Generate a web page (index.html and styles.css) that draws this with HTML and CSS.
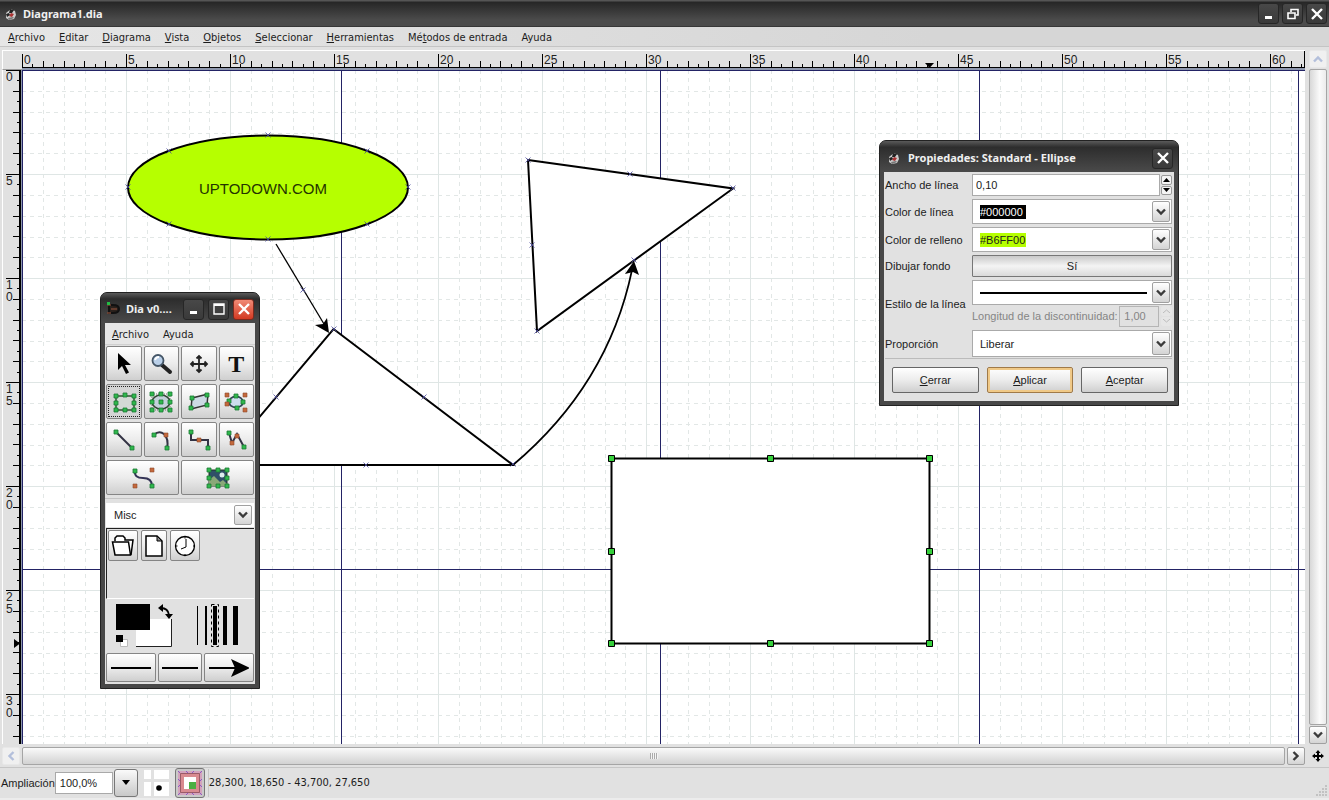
FILE: index.html
```html
<!DOCTYPE html>
<html lang="es">
<head>
<meta charset="utf-8">
<title>Diagrama1.dia</title>
<link rel="stylesheet" href="styles.css">
</head>
<body>
<svg class="defs" aria-hidden="true">
  <defs>
    <symbol id="app" viewBox="0 0 12 12">
      <path d="M1 5l5-4 4 2 1 4-2 4-5 1-3-2z" fill="#ccc"/>
      <path d="M5 1l4 1-2 3-3 0zM1 6l3-1 1 2-3 2z" fill="#222"/>
      <path d="M6 5l3 1-2 3-3-1z" fill="#a33"/>
      <path d="M3 10l5-1 1 1-5 2z" fill="#777"/>
    </symbol>
    <symbol id="chev" viewBox="0 0 10 8"><path d="M1 1.500l4 4 4-4" fill="none" stroke="currentColor" stroke-width="2.4"/></symbol>
    <symbol id="close" viewBox="0 0 12 12"><path d="M1 1l10 10M11 1L1 11" stroke="#fff" stroke-width="2.4"/></symbol>
    <symbol id="min" viewBox="0 0 12 12"><path d="M2 8h7v3H2z" fill="#fff"/></symbol>
    <g id="n"><path d="M-2-2h4v4h-4z" fill="#2fb84c" stroke="#1d7a35" stroke-width=".8"/></g>
    <g id="o"><path d="M-2-2h4v4h-4z" fill="#c4683c" stroke="#8f4a2c" stroke-width=".6"/></g>
    <g id="x"><path d="M-2.500-2.500l5 5M2.500-2.500l-5 5" stroke="#4a4a9c" stroke-width=".8"/></g>
    <g id="h"><path d="M-3-3h6v6h-6z" fill="#36d03c" stroke="#000"/></g>
    <pattern id="grid" width="104" height="104" patternUnits="userSpaceOnUse">
      <g stroke="#e2e7e6" stroke-dasharray="4 4">
        <path d="M21.500 0v104M42.500 0v104M63.500 0v104M83.500 0v104M0 21.500h104M0 42.500h104M0 63.500h104M0 83.500h104"/>
      </g>
      <path d="M.5 0v104M0 .5h104" stroke="#dfe6e5"/>
    </pattern>
    <pattern id="hticks" width="104" height="20" patternUnits="userSpaceOnUse">
      <path d="M.5 3v14M21.500 10v7M42.500 10v7M62.500 10v7M83.500 10v7M10.500 13v4M31.500 13v4M52.500 13v4M73.500 13v4M94.500 13v4" stroke="#000"/>
    </pattern>
    <pattern id="vticks" width="20" height="104" patternUnits="userSpaceOnUse">
      <path d="M3 .5h14M10 21.500h7M10 42.500h7M10 62.500h7M10 83.500h7M14 10.500h3M14 31.500h3M14 52.500h3M14 73.500h3M14 94.500h3" stroke="#000"/>
    </pattern>
  </defs>
</svg>

<header class="titlebar">
  <svg class="appicon"><use href="#app"/></svg>
  <h1>Diagrama1.dia</h1>
  <button class="winbtn" aria-label="Minimizar"><svg><use href="#min"/></svg></button>
  <button class="winbtn" aria-label="Restaurar"><svg viewBox="0 0 12 12"><path d="M4 4V1.500h7V7H9M4 1.500h7" fill="none" stroke="#fff" stroke-width="1.600"/><path d="M1 5h7v5.500H1z" fill="none" stroke="#fff" stroke-width="1.600"/></svg></button>
  <button class="winbtn" aria-label="Cerrar ventana"><svg><use href="#close"/></svg></button>
</header>

<nav class="menubar">
  <button><u>A</u>rchivo</button><button><u>E</u>ditar</button><button><u>D</u>iagrama</button><button><u>V</u>ista</button><button><u>O</u>bjetos</button><button><u>S</u>eleccionar</button><button><u>H</u>erramientas</button><button>Mé<u>t</u>odos de entrada</button><button>Ayuda</button>
</nav>

<main class="work">
  <div class="corner"></div>
  <svg class="hruler" aria-label="Regla horizontal">
    <rect width="100%" height="17" fill="url(#hticks)"/>
    <path d="M903 12h9l-4.500 5z"/>
    <g class="num">
      <text x="2" y="13">0</text><text x="106" y="13">5</text><text x="210" y="13">10</text><text x="314" y="13">15</text><text x="418" y="13">20</text><text x="522" y="13">25</text><text x="626" y="13">30</text><text x="730" y="13">35</text><text x="834" y="13">40</text><text x="938" y="13">45</text><text x="1042" y="13">50</text><text x="1146" y="13">55</text><text x="1250" y="13">60</text>
    </g>
  </svg>
  <svg class="vruler" aria-label="Regla vertical">
    <rect width="17" height="100%" fill="url(#vticks)"/>
    <path d="M11 569v9l6-4.500z"/>
    <g class="num">
      <text x="3" y="11">0</text><text x="3" y="115">5</text>
      <text x="3" y="219">1</text><text x="3" y="231">0</text>
      <text x="3" y="323">1</text><text x="3" y="335">5</text>
      <text x="3" y="427">2</text><text x="3" y="439">0</text>
      <text x="3" y="531">2</text><text x="3" y="543">5</text>
      <text x="3" y="635">3</text><text x="3" y="647">0</text>
    </g>
  </svg>
  <svg class="canvas" role="img" aria-label="Diagrama">
    <rect width="100%" height="100%" fill="url(#grid)"/>
    <g transform="translate(-22 -70)">
      <path d="M22.500 70v800M341.500 70v800M660.500 70v800M979.500 70v800M1298.500 70v800M22 70.500h1600M22 569.500h1600" stroke="#232365" fill="none"/>
      <ellipse cx="268" cy="187.500" rx="140" ry="52" fill="#b6ff00" stroke="#000" stroke-width="2"/>
      <text class="shape-text" x="263" y="194">UPTODOWN.COM</text>
      <g fill="#fff" stroke="#000" stroke-width="2">
        <path d="M528 160L733 188.500 537 331z"/>
        <path d="M333.500 329L513 465H219z"/>
        <path d="M611.500 458.500h318v185h-318z"/>
      </g>
      <path d="M276 244l48 80" stroke="#000" stroke-width="1.300"/>
      <path d="M329 333l-14-8 8-1 4-6z"/>
      <path d="M513 465Q608 385 632 270" fill="none" stroke="#000" stroke-width="1.700"/>
      <path d="M634 261l5 14-6-3-8 2z"/>
      <use href="#x" x="268" y="135"/><use href="#x" x="268" y="239"/><use href="#x" x="128" y="187"/><use href="#x" x="408" y="187"/><use href="#x" x="169" y="151"/><use href="#x" x="367" y="151"/><use href="#x" x="169" y="224"/><use href="#x" x="367" y="224"/>
      <use href="#x" x="528" y="160"/><use href="#x" x="630" y="174"/><use href="#x" x="733" y="188"/><use href="#x" x="532" y="245"/><use href="#x" x="537" y="331"/><use href="#x" x="634" y="260"/>
      <use href="#x" x="303" y="290"/><use href="#x" x="334" y="329"/><use href="#x" x="276" y="397"/><use href="#x" x="424" y="397"/><use href="#x" x="366" y="465"/><use href="#x" x="513" y="464"/>
      <use href="#h" x="611.500" y="458.500"/><use href="#h" x="770.500" y="458.500"/><use href="#h" x="929.500" y="458.500"/><use href="#h" x="611.500" y="551.500"/><use href="#h" x="929.500" y="551.500"/><use href="#h" x="611.500" y="643.500"/><use href="#h" x="770.500" y="643.500"/><use href="#h" x="929.500" y="643.500"/>
    </g>
  </svg>
  <div class="vscroll">
    <button class="arrow off" aria-label="Subir"><svg class="up"><use href="#chev"/></svg></button>
    <div class="thumb"></div>
    <button class="arrow" aria-label="Bajar"><svg><use href="#chev"/></svg></button>
  </div>
  <div class="hscroll">
    <button class="arrow off" aria-label="Izquierda"><svg class="left"><use href="#chev"/></svg></button>
    <div class="thumb"><i></i></div>
    <button class="arrow" aria-label="Derecha"><svg class="right"><use href="#chev"/></svg></button>
  </div>
  <button class="pan" aria-label="Navegar"><svg viewBox="0 0 12 12"><path d="M6 0l2.500 3H7v2h2V3.500L12 6 9 8.500V7H7v2h1.500L6 12 3.500 9H5V7H3v1.500L0 6l3-2.500V5h2V3H3.500z"/></svg></button>
</main>

<footer class="status">
  <label for="zoom">Ampliación</label>
  <input id="zoom" value="100,0%">
  <button class="zoombtn" aria-label="Elegir ampliación"><svg viewBox="0 0 8 5"><path d="M0 0h8L4 5z"/></svg></button>
  <button class="snapgrid" aria-label="Ajustar a la rejilla"><svg viewBox="0 0 26 26"><path d="M0 0h7v9H0zM10 0h15v9H10zM0 12h7v14H0zM10 12h15v14H10z" fill="#fff"/><circle cx="15" cy="18" r="2.800"/></svg></button>
  <button class="snapobj" aria-label="Ajustar a objetos"><svg viewBox="0 0 26 26"><path d="M1 1h24v24H1z" fill="#d4a3bd"/><path d="M1 1l24 24M25 1L1 25M9 1l4 4 4-4M9 25l4-4 4 4M1 9l4 4-4 4M25 9l-4 4 4 4" stroke="#8a5bc4" fill="none"/><path d="M5 5h16v16H5z" fill="#fff" stroke="#d98a90" stroke-width="4"/><path d="M3.500 3.500h19v19h-19z" fill="none" stroke="#9a5a68"/><path d="M12 12h7v7h-7z" fill="#4caf43"/></svg></button>
  <output>28,300, 18,650 - 43,700, 27,650</output>
  <svg class="grip" viewBox="0 0 12 12"><path d="M10 0h2v2h-2zM7 3h2v2H7zM10 3h2v2h-2zM4 6h2v2H4zM7 6h2v2H7zM10 6h2v2h-2zM1 9h2v2H1zM4 9h2v2H4zM7 9h2v2H7zM10 9h2v2h-2z" fill="#c2c2c2"/></svg>
</footer>

<section class="window toolbox" aria-label="Dia">
  <header>
    <svg class="toolicon" viewBox="0 0 14 14"><path d="M3 3h4q6 0 6 4t-6 4H3z" fill="#2a211c" stroke="#111" stroke-width="2"/><path d="M1 3h4M1 11h4M5 7h6" stroke="#743" stroke-width="1.500"/><path d="M1 0h3v3H1z" fill="#2b4"/></svg>
    <h2>Dia v0....</h2>
    <button class="winbtn" aria-label="Minimizar"><svg><use href="#min"/></svg></button>
    <button class="winbtn" aria-label="Maximizar"><svg viewBox="0 0 12 12"><path d="M1 1h10v10H1z" fill="none" stroke="#fff" stroke-width="1.400"/><path d="M1 2h10" stroke="#fff" stroke-width="2"/></svg></button>
    <button class="winbtn red" aria-label="Cerrar"><svg><use href="#close"/></svg></button>
  </header>
  <div class="body">
    <nav><button><u>A</u>rchivo</button><button>Ayuda</button></nav>
    <div class="tools">
      <button aria-label="Modificar"><svg viewBox="0 0 24 24"><path d="M6 1v17l4-4 4 8 3-1.500-4-7.500h6z"/></svg></button>
      <button aria-label="Ampliar"><svg viewBox="0 0 24 24"><path d="M13 13l8 7" stroke="#222" stroke-width="4" stroke-linecap="round"/><circle cx="9" cy="8.500" r="5.500" fill="#b9cfe8" stroke="#456" stroke-width="1.800"/><path d="M6 8q1-3 4-3" stroke="#fff" stroke-width="1.800" fill="none"/></svg></button>
      <button aria-label="Desplazar"><svg viewBox="0 0 24 24"><path d="M12 5v14M5 12h14" stroke="#222" stroke-width="1.800"/><path d="M9.500 6.500L12 4l2.500 2.500M9.500 17.500L12 20l2.500-2.500M6.500 9.500L4 12l2.500 2.500M17.500 9.500L20 12l-2.500 2.500" fill="none" stroke="#222" stroke-width="1.800"/></svg></button>
      <button aria-label="Texto" class="tletter">T</button>
      <button aria-label="Caja" class="on"><svg viewBox="0 0 24 24"><path d="M4 6h18v14H4z" fill="#d3d9d5" stroke="#353" stroke-width="1.500"/><use href="#n" x="4" y="6"/><use href="#n" x="13" y="5"/><use href="#n" x="22" y="6"/><use href="#n" x="4" y="13"/><use href="#n" x="22" y="13"/><use href="#n" x="4" y="20"/><use href="#n" x="13" y="20"/><use href="#n" x="22" y="20"/></svg></button>
      <button aria-label="Elipse"><svg viewBox="0 0 24 24"><path d="M3 4h18v16H3z" fill="none" stroke="#777" stroke-dasharray="1 1"/><ellipse cx="12" cy="12" rx="9" ry="7" fill="#c3d0da" stroke="#343" stroke-width="1.500"/><use href="#n" x="3" y="4"/><use href="#n" x="12" y="4"/><use href="#n" x="21" y="4"/><use href="#n" x="3" y="12"/><use href="#n" x="12" y="12"/><use href="#n" x="21" y="12"/><use href="#n" x="3" y="20"/><use href="#n" x="12" y="20"/><use href="#n" x="21" y="20"/></svg></button>
      <button aria-label="Polígono"><svg viewBox="0 0 24 24"><path d="M5 8l16-4-1 11-16 4z" fill="#ccd9e4" stroke="#333" stroke-width="1.500"/><use href="#n" x="5" y="8"/><use href="#n" x="20" y="5"/><use href="#n" x="20" y="15"/><use href="#n" x="4" y="18"/></svg></button>
      <button aria-label="Beziergon"><svg viewBox="0 0 24 24"><ellipse cx="12" cy="12" rx="7" ry="5.500" fill="#cde" stroke="#345" stroke-width="1.800"/><use href="#n" x="12" y="6"/><use href="#n" x="5" y="11"/><use href="#n" x="19" y="12"/><use href="#n" x="13" y="18"/><use href="#o" x="3" y="5"/><use href="#o" x="21" y="5"/><use href="#o" x="3" y="14"/><use href="#o" x="21" y="20"/></svg></button>
      <button aria-label="Línea"><svg viewBox="0 0 24 24"><path d="M5 5l15 15" stroke="#334" stroke-width="2"/><use href="#n" x="4" y="4"/><use href="#n" x="20" y="20"/></svg></button>
      <button aria-label="Arco"><svg viewBox="0 0 24 24"><path d="M5 7Q10 2 15 6 20 11 18 20" fill="none" stroke="#334" stroke-width="2"/><use href="#n" x="5" y="7"/><use href="#o" x="17" y="7"/><use href="#n" x="18" y="20"/></svg></button>
      <button aria-label="Línea en zigzag"><svg viewBox="0 0 24 24"><path d="M4 4v8h17v9" fill="none" stroke="#334" stroke-width="2"/><use href="#n" x="4" y="4"/><use href="#o" x="12" y="12"/><use href="#n" x="21" y="20"/></svg></button>
      <button aria-label="Polilínea"><svg viewBox="0 0 24 24"><path d="M5 5l3 10 5-9 7 13" fill="none" stroke="#334" stroke-width="2"/><use href="#n" x="5" y="5"/><use href="#o" x="8" y="15"/><use href="#o" x="13" y="8"/><use href="#n" x="20" y="19"/></svg></button>
      <button aria-label="Curva Bézier" class="wide"><svg viewBox="0 0 24 24"><path d="M4 5q-1 7 8 7t9 8" fill="none" stroke="#335" stroke-width="2"/><use href="#n" x="4" y="5"/><use href="#n" x="21" y="20"/><use href="#o" x="21" y="4"/><use href="#o" x="4" y="20"/></svg></button>
      <button aria-label="Imagen" class="wide"><svg viewBox="0 0 24 24"><path d="M3 4h18v16H3z" fill="#2f4f68" stroke="#232"/><circle cx="16" cy="9" r="2.500" fill="#dee"/><path d="M3 20v-6l5-4 6 6 3-2 4 4v2z" fill="#8aa878"/><use href="#n" x="3" y="4"/><use href="#n" x="12" y="4"/><use href="#n" x="21" y="4"/><use href="#n" x="3" y="12"/><use href="#n" x="21" y="12"/><use href="#n" x="3" y="20"/><use href="#n" x="12" y="20"/><use href="#n" x="21" y="20"/></svg></button>
    </div>
    <div class="combo sheet"><select aria-label="Hoja de formas"><option>Misc</option></select><span class="arrow"><svg><use href="#chev"/></svg></span></div>
    <div class="tray">
      <button aria-label="Carpeta"><svg viewBox="0 0 24 24"><path d="M4 7V4l2-2h6l2 2v2h8l-2 15" fill="#fff" stroke="#000" stroke-width="1.500"/><path d="M1.500 8h16l2 13H4z" fill="#fff" stroke="#000" stroke-width="1.500"/></svg></button>
      <button aria-label="Archivo"><svg viewBox="0 0 20 24"><path d="M2 2h11l5 5v15H2z" fill="#fff" stroke="#000" stroke-width="1.500"/><path d="M13 2v5h5z" fill="#888" stroke="#000"/></svg></button>
      <button aria-label="Reloj"><svg viewBox="0 0 24 24"><circle cx="12" cy="12" r="9.500" fill="#fff" stroke="#000" stroke-width="1.300"/><path d="M13 5v8l-5 2M12 2.500v2M12 20v2M2.500 12h2M20 12h2" fill="none" stroke="#000"/></svg></button>
    </div>
    <div class="attrs">
      <svg class="colors" viewBox="0 0 64 48" role="img" aria-label="Colores"><path d="M22 16h36v28H22z" fill="#fff"/><path d="M57.500 16v27.500H22" fill="none" stroke="#222"/><path d="M2 1h34v26H2z"/><path d="M47 5q7 0 8 7" fill="none" stroke="#000" stroke-width="1.800"/><path d="M44 5l5-4v8zM55 16l-4-5h8z"/><path d="M6.500 36.500h7v7h-7z" fill="#fff" stroke="#bbb"/><path d="M2 32h7v7H2z"/></svg>
      <svg class="widths" viewBox="0 0 44 48" role="img" aria-label="Ancho de línea"><path d="M1 3h1v39H1zM9 3h2v39H9zM17 3h4v39h-4zM27 3h4v39h-4zM37 3h5v39h-5z"/><path d="M15.500 1.500h7v42h-7z" fill="none" stroke="#000" stroke-dasharray="3 3"/></svg>
    </div>
    <div class="ends">
      <button aria-label="Flecha inicial"><svg viewBox="0 0 40 20"><path d="M0 10h40" stroke="#000" stroke-width="2"/></svg></button>
      <button aria-label="Estilo de línea"><svg viewBox="0 0 36 20"><path d="M0 10h36" stroke="#000" stroke-width="2"/></svg></button>
      <button aria-label="Flecha final"><svg viewBox="0 0 40 20"><path d="M0 10h26" stroke="#000" stroke-width="2"/><path d="M22 1l19 9-19 9 4-9z"/></svg></button>
    </div>
  </div>
</section>

<section class="window props" aria-label="Propiedades">
  <header>
    <svg class="appicon"><use href="#app"/></svg>
    <h2>Propiedades: Standard - Ellipse</h2>
    <button class="winbtn" aria-label="Cerrar"><svg><use href="#close"/></svg></button>
  </header>
  <form class="body">
    <div class="fields">
      <label for="lw">Ancho de línea</label>
      <div class="spin"><input id="lw" value="0,10"><span class="steps"><button type="button" aria-label="Más"><svg viewBox="0 0 7 4"><path d="M0 4h7L3.500 0z"/></svg></button><button type="button" aria-label="Menos"><svg viewBox="0 0 7 4"><path d="M0 0h7L3.500 4z"/></svg></button></span></div>
      <label for="lc">Color de línea</label>
      <div class="combo"><select id="lc" class="chip black"><option>#000000</option></select><span class="arrow"><svg><use href="#chev"/></svg></span></div>
      <label for="fc">Color de relleno</label>
      <div class="combo"><select id="fc" class="chip lime"><option>#B6FF00</option></select><span class="arrow"><svg><use href="#chev"/></svg></span></div>
      <label for="bg">Dibujar fondo</label>
      <button id="bg" type="button" class="toggle" aria-pressed="true">Sí</button>
      <label for="ls">Estilo de la línea</label>
      <div class="style">
        <div class="combo"><button id="ls" type="button" class="stroke" aria-haspopup="listbox"><span></span></button><span class="arrow"><svg><use href="#chev"/></svg></span></div>
        <div class="dash"><label for="dl">Longitud de la discontinuidad:</label><input id="dl" value="1,00" disabled><span class="steps"><button type="button" disabled aria-label="Más"><svg viewBox="0 0 7 4"><path d="M0 4l3.500-3L7 4" fill="none" stroke="#bbb"/></svg></button><button type="button" disabled aria-label="Menos"><svg viewBox="0 0 7 4"><path d="M0 0l3.500 3L7 0" fill="none" stroke="#bbb"/></svg></button></span></div>
      </div>
      <label for="pr">Proporción</label>
      <div class="combo tall"><select id="pr"><option>Liberar</option></select><span class="arrow"><svg><use href="#chev"/></svg></span></div>
    </div>
    <div class="actions"><button type="button"><span><u>C</u>errar</span></button><button type="button" class="default"><span><u>A</u>plicar</span></button><button type="button"><span><u>A</u>ceptar</span></button></div>
  </form>
</section>
</body>
</html>
```
FILE: styles.css
```css
* { box-sizing: border-box; }
body {
  margin: 0;
  height: 100vh;
  display: flex;
  flex-direction: column;
  overflow: hidden;
  position: relative;
  background: #e1e1e1;
  color: #1c1c1c;
  font: 11px/14px "Liberation Sans", Arial, sans-serif;
}
.defs { position: absolute; width: 0; height: 0; }
button, input, select { font: inherit; color: inherit; margin: 0; padding: 0; border: 0; background: none; }
select { appearance: none; outline: 0; }
svg { display: block; }
h1, h2 { margin: 0; flex: 1; font: bold 11px/14px "Noto Sans", "Open Sans", sans-serif; color: #f0f0f0; white-space: nowrap; }

/* Title bars */
.titlebar {
  height: 27px;
  flex: none;
  display: flex;
  align-items: center;
  gap: 3px;
  padding: 0 2px 0 5px;
  background: linear-gradient(#555 0 1px, #262626 2px, #4b4b4b 20px, #4b4b4b 26px, #222 27px);
}
.appicon { width: 12px; height: 12px; margin-right: 3px; }
.winbtn {
  width: 21px;
  height: 21px;
  display: grid;
  place-items: center;
  border: 1px solid #262626;
  border-radius: 3px;
  background: linear-gradient(#484848, #3a3a3a);
}
.winbtn svg { width: 12px; height: 12px; }
.winbtn.red { background: linear-gradient(#f08a76, #d33a22); border-color: #7d2a1e; }

.menubar, .toolbox nav { display: flex; align-items: center; gap: 14px; font-family: "DejaVu Sans Condensed", "DejaVu Sans", sans-serif; }
.menubar { height: 20px; flex: none; padding: 2px 8px 0; background: linear-gradient(90deg, #e6e6e6, #d6d6d6 70%); border-bottom: 1px solid #c4c4c4; }

/* Rulers, canvas and scrollbars */
.work {
  flex: 1;
  min-height: 0;
  display: grid;
  grid-template: 20px minmax(0, 1fr) 18px / 20px minmax(0, 1fr) 18px;
  padding: 3px 2px 2px;
}
.corner { border: solid #fff; border-width: 1px 0 0 1px; border-bottom: 1px solid #999; }
.hruler { height: 20px; border-top: 1px solid #fff; border-bottom: 2px solid #8e97ad; box-shadow: inset 0 -1px #000, inset -1px 0 #000; }
.vruler { width: 20px; border-left: 1px solid #fff; border-right: 1px solid #8e97ad; box-shadow: inset -2px 0 #000; }
.num { font: 12px "Liberation Sans", sans-serif; fill: #222; }
.canvas { background: #fff; overflow: hidden; }
.hruler, .canvas { grid-column: 2; width: calc(100% - 4px); }
.vruler, .canvas { height: calc(100% - 3px); }
.vscroll { grid-area: 1 / 3 / 3 / 4; display: flex; flex-direction: column; gap: 1px; padding-bottom: 3px; }
.shape-text { font: 15px "Liberation Sans", Arial, sans-serif; text-anchor: middle; fill: #243300; }
.hscroll { grid-area: 3 / 1 / 4 / 3; display: flex; gap: 2px; padding-right: 4px; }
.thumb { flex: 1; display: grid; place-items: center; border: 1px solid #a5a5a5; border-radius: 2px; background: linear-gradient(#fafafa, #d2d2d2); }
.vscroll .thumb { background: linear-gradient(90deg, #d8d8d8, #fafafa 60%, #ececec); }
.thumb i { width: 8px; height: 6px; background: repeating-linear-gradient(90deg, #aaa 0 1px, #f4f4f4 1px 2px); }
.arrow {
  flex: none;
  width: 18px;
  height: 18px;
  display: grid;
  place-items: center;
  border: 1px solid #a0a0a0;
  border-radius: 2px;
  background: linear-gradient(#fff, #d4d4d4);
  color: #3b3b3b;
}
.arrow svg { width: 10px; height: 8px; }
.arrow.off { color: #b3bfdb; border-color: #e8e8e8; background: #f0f0f0; }
.up { transform: rotate(180deg); }
.left { transform: rotate(90deg); }
.right { transform: rotate(-90deg); }
.pan { display: grid; place-items: center; grid-area: 3 / 3; }
.pan svg { width: 12px; height: 12px; }

/* Status bar */
.status { flex: none; height: 33px; display: flex; align-items: center; padding: 0 2px 3px 1px; border-top: 1px solid #c6c6c6; box-shadow: inset 0 -2px #ececec; }
.status input { width: 58px; height: 22px; padding: 0 4px; border: 1px solid #a9a9a9; background: #fff; }
.zoombtn { width: 24px; height: 28px; margin-left: 1px; display: grid; place-items: center; border: 1px solid #777; border-radius: 3px; background: linear-gradient(#fafafa, #c8c8c8); }
.zoombtn svg { width: 8px; height: 5px; }
.snapgrid { margin: 0 5px 0 6px; }
.snapgrid svg, .snapobj svg { width: 26px; height: 26px; }
.snapobj { width: 30px; height: 30px; display: grid; place-items: center; border: 1px solid #777; border-radius: 3px; background: #c9c9c9; }
.status output { flex: 1; margin-left: 3px; line-height: 28px; border-left: 1px solid #c6c6c6; font-family: "DejaVu Sans Condensed", "DejaVu Sans", sans-serif; }
.grip { width: 12px; height: 12px; align-self: flex-end; }

/* Floating windows */
.window { position: absolute; padding: 0 4px 4px; border: 1px solid #222; border-radius: 7px 7px 0 0; background: #484848; }
.window header { display: flex; align-items: center; gap: 5px; height: 30px; margin: 0 -4px; padding: 2px 5px 0; border-radius: 6px 6px 0 0; background: linear-gradient(#5a5a5a, #2d2d2d 20%, #4a4a4a); }
.window .body { background: #e1e1e1; }
.toolbox { left: 100px; top: 292px; width: 160px; }
.toolbox header { gap: 4px; }
.toolicon { width: 14px; height: 14px; margin-right: 2px; }
.toolbox nav { height: 22px; padding: 2px 7px 0; background: #e6e6e6; border-bottom: 1px solid #d0d0d0; }
.toolbox .body { padding-bottom: 2px; }
.tools { display: grid; grid-template-columns: repeat(4, minmax(0, 1fr)); grid-auto-rows: 35px; gap: 3px 2px; padding: 1px 1px 3px; border-bottom: 1px solid #c4c4c4; }
.tools button, .tray button, .ends button, .actions button {
  display: grid;
  place-items: center;
  border: 1px solid #858585;
  border-radius: 2px;
  background: linear-gradient(#fff, #ececec 50%, #cfcfcf);
}
.tools svg { width: 24px; height: 24px; overflow: visible; }
.tools .wide { grid-column: span 2; }
.tools .on { background: #d5d5d5; outline: 1px dotted #222; outline-offset: -3px; }
.tools .tletter { font: bold 24px/28px "Liberation Serif", serif; color: #111; }
.combo { display: flex; align-items: center; height: 25px; border: 1px solid #aaa; background: #fff; padding: 1px; }
.combo select { flex: 1; padding-left: 6px; }
.combo .arrow { height: 100%; margin-left: auto; }
.sheet { height: 24px; margin: 4px 1px 1px; border-color: #fff; }
.tray { display: flex; align-items: flex-start; gap: 3px; height: 71px; padding: 1px; margin: 0 1px; border: solid #222; border-width: 1px 0 0 1px; border-bottom: 1px solid #fff; }
.tray button { width: 30px; height: 31px; }
.tray button:nth-child(2) { width: 26px; }
.tray svg { width: 24px; height: 24px; }
.tray button:nth-child(2) svg { width: 20px; }
.attrs { display: flex; gap: 18px; padding: 4px 9px 2px; }
.colors { width: 64px; height: 48px; }
.widths { width: 44px; height: 48px; }
.ends { display: grid; grid-template-columns: 50fr 43fr 50fr; gap: 2px; padding: 0 1px; }
.ends button { height: 29px; }
.ends svg { height: 20px; }

.props { left: 879px; top: 140px; width: 300px; }
.props header { height: 31px; padding: 3px 5px 0 8px; }
.props .body { padding: 2px 2px 8px 1px; }
.fields { display: grid; grid-template-columns: 87px minmax(0, 1fr); align-items: center; row-gap: 3px; padding-bottom: 1px; border-bottom: 1px solid #bbb; }
.fields > label { white-space: nowrap; }
.spin, .dash { display: flex; align-items: center; gap: 1px; height: 22px; }
.spin input { flex: 1; min-width: 0; height: 22px; padding: 0 3px; border: 1px solid #aaa; background: #fff; }
.steps { width: 11px; height: 20px; display: grid; gap: 1px; }
.steps button { display: grid; place-items: center; border: 1px solid #999; border-radius: 2px; background: #f4f4f4; }
.steps button:disabled { border-color: #e6e6e6; background: #e6e6e6; }
.steps svg { width: 7px; height: 4px; }
.combo select.chip { flex: none; width: 46px; height: 14px; margin-left: 6px; padding: 0; }
.combo select.black { background: #000; color: #fff; }
.combo select.lime { background: #b6ff00; }
.toggle { height: 22px; border: 1px solid #777; border-radius: 1px; background: linear-gradient(#c9c9c9, #f4f4f4 50%, #dadada); }
.stroke { flex: 1; height: 100%; padding: 0 5px 0 6px; }
.stroke span { display: block; height: 2px; background: #000; }
.dash { justify-content: space-between; color: #858585; white-space: nowrap; }
.dash input { width: 40px; height: 21px; padding: 0 4px; border: 1px solid #b5b5b5; background: #e1e1e1; }
.combo.tall { height: 27px; }
.actions { display: grid; grid-template-columns: repeat(3, minmax(0, 1fr)); gap: 8px; padding: 8px 4px 0 7px; }
.actions button { height: 26px; border-color: #666; }
.actions .default { border-color: #a07a48; box-shadow: inset 0 0 0 2px #f0c987; }
```
